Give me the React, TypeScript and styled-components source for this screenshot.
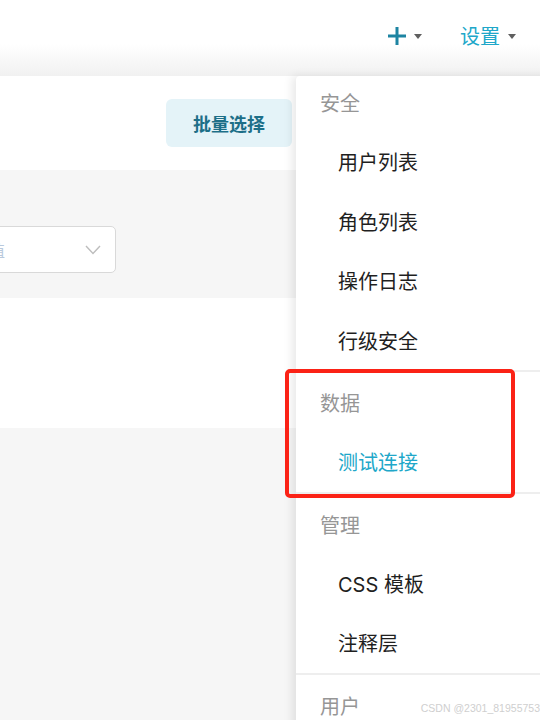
import React from "react";
import styled, { createGlobalStyle } from "styled-components";

const Global = createGlobalStyle`
  html, body { margin: 0; padding: 0; }
  body {
    width: 540px;
    height: 720px;
    overflow: hidden;
    background: #f6f6f6;
    font-family: Inter, "Noto Sans CJK SC", sans-serif;
  }
`;

const Page = styled.div`
  position: relative;
  width: 540px;
  height: 720px;
  overflow: hidden;
  display: flex;
  flex-direction: column;
`;

const Header = styled.header`
  height: 76px;
  flex: none;
  display: flex;
  align-items: center;
  justify-content: flex-end;
  padding: 0 24px 4px 0;
  box-sizing: border-box;
  background: linear-gradient(to bottom, #ffffff 58%, #f1f1f1 100%);
`;

const NavItem = styled.div<{ $gap?: number }>`
  display: flex;
  align-items: center;
  gap: 8px;
  margin-left: ${(p) => p.$gap ?? 0}px;
`;

const NavText = styled.span`
  font-size: 20px;
  color: #20a7c9;
  font-family: "Noto Sans CJK SC", sans-serif;
  line-height: 1;
`;

const Caret = styled.span`
  width: 0;
  height: 0;
  border-left: 4px solid transparent;
  border-right: 4px solid transparent;
  border-top: 5px solid #5f5f5f;
  margin-top: 1px;
`;

const Toolbar = styled.section`
  height: 94px;
  flex: none;
  background: #ffffff;
  display: flex;
  align-items: center;
  padding-left: 166px;
`;

const BatchButton = styled.button`
  width: 126px;
  height: 48px;
  border: none;
  border-radius: 6px;
  background: #e4f3f8;
  color: #1d6f88;
  font-family: "Noto Sans CJK SC", sans-serif;
  font-weight: 700;
  font-size: 18px;
  padding: 0;
  cursor: pointer;
`;

const FilterBar = styled.section`
  height: 128px;
  flex: none;
  background: #f6f6f6;
  display: flex;
  align-items: flex-start;
  padding-top: 56px;
  box-sizing: border-box;
`;

const Select = styled.div`
  width: 236px;
  height: 47px;
  margin-left: -120px;
  box-sizing: border-box;
  border: 1px solid #d9d9d9;
  border-radius: 5px;
  background: #ffffff;
  display: flex;
  align-items: center;
  padding: 0 14px 0 12px;
`;

const Placeholder = styled.span`
  width: 112px;
  text-align: right;
  font-size: 16px;
  color: #b9c9dc;
  font-family: "Noto Sans CJK SC", sans-serif;
  white-space: nowrap;
  overflow: hidden;
`;

const Spacer = styled.span`
  flex: 1;
`;

const ResultPanel = styled.section`
  height: 130px;
  flex: none;
  background: #ffffff;
`;

const Rest = styled.section`
  flex: 1;
  background: #f6f6f6;
`;

const Menu = styled.nav`
  position: absolute;
  left: 296px;
  top: 76px;
  width: 260px;
  height: 680px;
  background: #ffffff;
  border-radius: 4px 0 0 0;
  box-shadow: -4px 0 10px rgba(0, 0, 0, 0.09);
  font-family: "Noto Sans CJK SC", sans-serif;
`;

const Group = styled.div<{ $divider?: boolean }>`
  border-top: ${(p) => (p.$divider ? "2px solid #eeeeee" : "none")};
`;

const GroupLabel = styled.div<{ $first?: boolean }>`
  padding: ${(p) => (p.$first ? "14px" : "18px")} 24px 16px;
  line-height: 26px;
  font-size: 20px;
  color: #969696;
`;

const MenuItem = styled.div<{ $active?: boolean }>`
  height: 59.5px;
  display: flex;
  align-items: center;
  padding-left: 42px;
  font-size: 20px;
  color: ${(p) => (p.$active ? "#20a7c9" : "#1f1f1f")};
  font-family: Inter, "Noto Sans CJK SC", sans-serif;
`;

const Highlight = styled.div`
  position: absolute;
  left: 285px;
  top: 369px;
  width: 230px;
  height: 129px;
  box-sizing: border-box;
  border: 4px solid #fb2216;
  border-radius: 5px;
  pointer-events: none;
`;

const Watermark = styled.div`
  position: absolute;
  right: 0;
  top: 700px;
  font-family: "Liberation Sans", Arial, sans-serif;
  font-size: 10.5px;
  line-height: 16px;
  color: #cfcfcf;
  white-space: nowrap;
`;

const PlusIcon = () => (
  <svg width="18" height="18" viewBox="0 0 18 18">
    <rect x="7.5" y="0" width="3" height="18" fill="#1d84a2" />
    <rect x="0" y="7.5" width="18" height="3" fill="#1d84a2" />
  </svg>
);

const Chevron = () => (
  <svg width="16" height="10" viewBox="0 0 16 10">
    <polyline points="1,1 8,8.5 15,1" fill="none" stroke="#bdbdbd" strokeWidth="1.4" />
  </svg>
);

const groups = [
  { label: "安全", items: ["用户列表", "角色列表", "操作日志", "行级安全"] },
  { label: "数据", items: ["测试连接"], active: "测试连接" },
  { label: "管理", items: ["CSS 模板", "注释层"] },
  { label: "用户", items: [] as string[] },
];

export default function App() {
  return (
    <Page>
      <Global />
      <Header>
        <NavItem>
          <PlusIcon />
          <Caret />
        </NavItem>
        <NavItem $gap={38}>
          <NavText>设置</NavText>
          <Caret />
        </NavItem>
      </Header>
      <Toolbar>
        <BatchButton>批量选择</BatchButton>
      </Toolbar>
      <FilterBar>
        <Select>
          <Placeholder>选择筛选值</Placeholder>
          <Spacer />
          <Chevron />
        </Select>
      </FilterBar>
      <ResultPanel />
      <Rest />
      <Menu>
        {groups.map((g, i) => (
          <Group key={g.label} $divider={i > 0}>
            <GroupLabel $first={i === 0}>{g.label}</GroupLabel>
            {g.items.map((it) => (
              <MenuItem key={it} $active={it === g.active}>
                {it}
              </MenuItem>
            ))}
          </Group>
        ))}
      </Menu>
      <Highlight />
      <Watermark>CSDN @2301_81955753</Watermark>
    </Page>
  );
}
